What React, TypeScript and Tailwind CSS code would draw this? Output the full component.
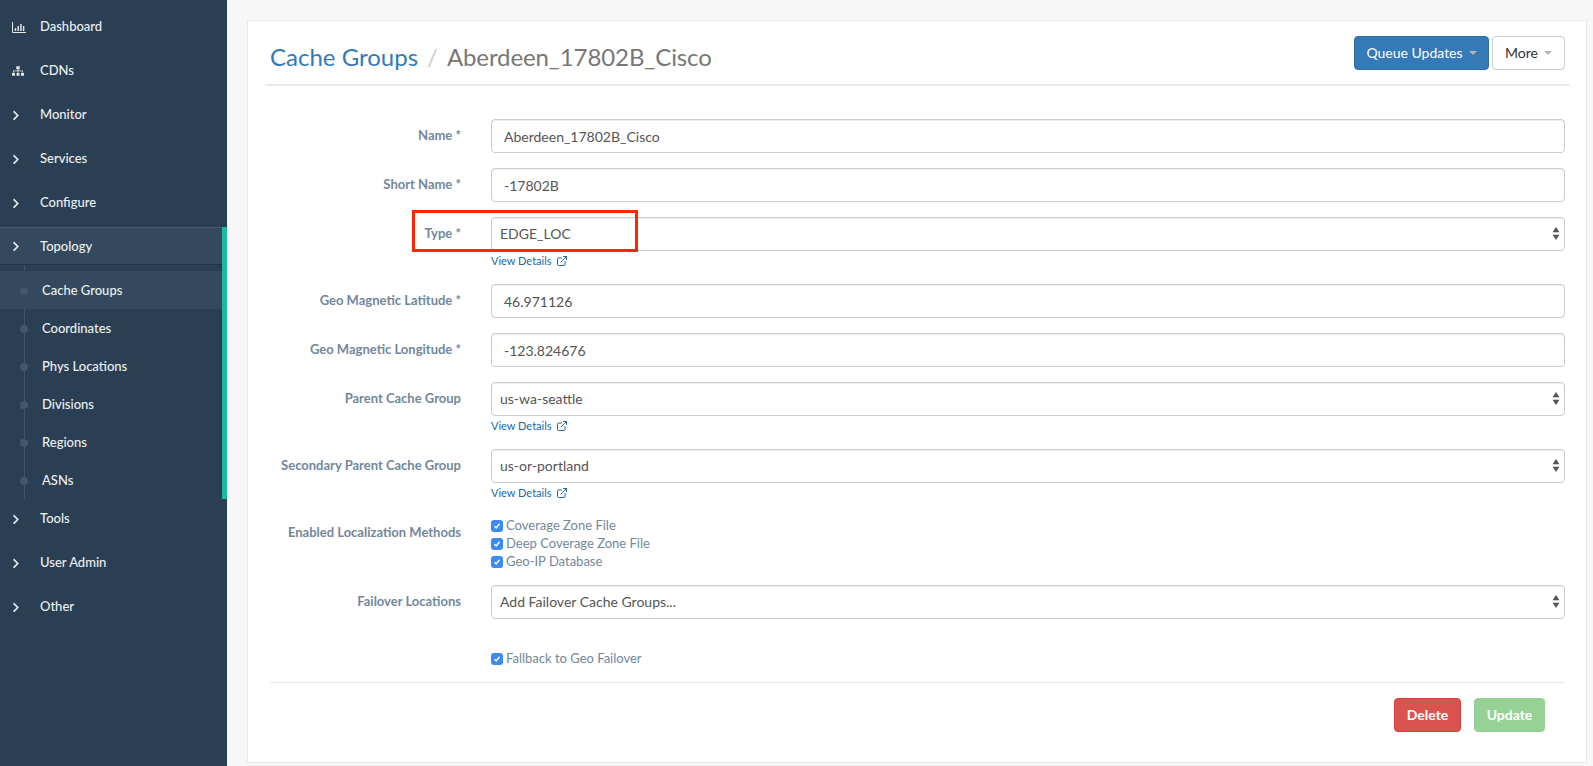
import { ExternalLink } from 'lucide-react';
import { FaChevronRight, FaSitemap } from 'react-icons/fa';

const font = { fontFamily: 'Lato, sans-serif' };

const subItems = ['Cache Groups', 'Coordinates', 'Phys Locations', 'Divisions', 'Regions', 'ASNs'];

function ChartIcon() {
  return (
    <svg width="14" height="11" viewBox="0 0 14 11" fill="none">
      <path d="M0.5 0V10.5H14" stroke="currentColor" strokeWidth="1" />
      <path d="M3.5 6V9M6.2 4V9M8.9 2V9M11.6 4V9" stroke="currentColor" strokeWidth="1.5" />
    </svg>
  );
}

function NavItem({ label, icon, active }: { label: string; icon?: React.ReactNode; active?: boolean }) {
  return (
    <div
      className={
        active
          ? 'flex h-[38px] items-center border-t border-t-[#455666] border-b border-b-[#24354a] bg-[#34495d] pt-[1px]'
          : 'flex h-11 items-center'
      }
    >
      <span className="flex w-[40px] shrink-0 pl-3 text-[#e7e7e7]">
        {icon ?? <FaChevronRight className="h-[11px] w-[8px]" />}
      </span>
      <span className="text-[13px] font-medium text-[#ecf0f1]">{label}</span>
    </div>
  );
}

function Sidebar() {
  return (
    <aside className="flex h-full w-[227px] shrink-0 flex-col bg-[#2a3f54] pt-[5px]">
      <NavItem label="Dashboard" icon={<ChartIcon />} />
      <NavItem label="CDNs" icon={<FaSitemap size={12} />} />
      <NavItem label="Monitor" />
      <NavItem label="Services" />
      <NavItem label="Configure" />
      <div className="mt-[2px] mb-[-2px] border-r-[5px] border-r-[#1abb9c]">
        <NavItem label="Topology" active />
        <div className="relative pt-[6px]">
          <div className="absolute left-[24px] top-0 bottom-0 w-px bg-[#425668]" />
          {subItems.map((item) => (
            <div
              key={item}
              className={`relative flex h-[38px] items-center pl-[42px] pt-[1px] text-[13px] font-medium text-[#ecf0f1] ${
                item === 'Cache Groups' ? 'bg-[#34495d]' : ''
              }`}
            >
              <span className="absolute left-[20px] h-2 w-2 rounded-full bg-[#425668]" />
              {item}
            </div>
          ))}
        </div>
      </div>
      <NavItem label="Tools" />
      <NavItem label="User Admin" />
      <NavItem label="Other" />
    </aside>
  );
}

function Label({ children, required }: { children: string; required?: boolean }) {
  return (
    <label className="w-[196px] shrink-0 pt-[7px] text-right text-[13px] font-bold text-[#73879c]">
      {children}
      {required && <span> *</span>}
    </label>
  );
}

function TextRow({ label, value }: { label: string; value: string }) {
  return (
    <div className="mb-[15px] flex">
      <Label required>{label}</Label>
      <input
        readOnly
        defaultValue={value}
        className="ml-[30px] h-[34px] flex-1 rounded border border-[#ccc] bg-white px-3 text-sm text-[#555] shadow-[inset_0_1px_1px_rgba(0,0,0,0.075)] outline-none"
      />
    </div>
  );
}

function SelectArrows() {
  return (
    <svg width="8" height="13" viewBox="0 0 8 13" className="pointer-events-none absolute right-[5px] top-[10px] text-[#555]">
      <path d="M4 0L7.5 5.2H0.5Z M0.5 7.8H7.5L4 13Z" fill="currentColor" />
    </svg>
  );
}

function SelectRow({
  label,
  value,
  required,
  details,
}: {
  label: string;
  value: string;
  required?: boolean;
  details?: boolean;
}) {
  return (
    <div className="mb-[15px] flex">
      <Label required={required}>{label}</Label>
      <div className="ml-[30px] flex-1">
        <div className="relative">
          <select
            defaultValue={value}
            className="h-[34px] w-full appearance-none rounded border border-[#ccc] bg-white px-2 text-sm text-[#555] shadow-[inset_0_1px_1px_rgba(0,0,0,0.075)] outline-none"
          >
            <option>{value}</option>
          </select>
          <SelectArrows />
        </div>
        {details && (
          <a className="flex h-[18px] items-center gap-[4px] pt-[2px] text-[11px] text-[#23689f]">
            View Details <ExternalLink size={12} />
          </a>
        )}
      </div>
    </div>
  );
}

function Check({ label }: { label: string }) {
  return (
    <div className="flex h-[18px] items-center gap-[3px] pt-[1px] text-[13px] text-[#73879c]">
      <span className="flex h-3 w-3 items-center justify-center rounded-[3px] bg-[#3b8af5]">
        <svg width="8" height="8" viewBox="0 0 8 8" fill="none">
          <path d="M1.5 4.2L3.2 6L6.5 1.8" stroke="white" strokeWidth="1.4" />
        </svg>
      </span>
      {label}
    </div>
  );
}

function Caret() {
  return <span className="ml-[6px] inline-block border-x-4 border-t-4 border-x-transparent border-t-[#b5b5b5]" />;
}

export default function App() {
  return (
    <div className="flex h-screen overflow-hidden bg-[#f7f7f7]" style={font}>
      <Sidebar />
      <main className="flex-1 pl-5 pr-[6px] pt-5">
        <div className="h-[743px] border border-[#e6e9ed] bg-white pl-[17px] pr-[16px]">
          <div className="flex h-[65px] items-start justify-between border-b-2 border-[#e6e9ed] pt-[15px]">
            <h1 className="pl-[5px] pt-[3px] text-2xl font-normal leading-[36px] text-[#777]">
              <a className="text-[#337ab7]">Cache Groups</a>
              <span className="px-[9px] text-[#ccc]">/</span>
              <span className="tracking-[-0.1px]">Aberdeen_17802B_Cisco</span>
            </h1>
            <div className="flex gap-[3px] pr-[5px]">
              <button className="flex h-[34px] w-[135px] items-center justify-center rounded border border-[#2e6da4] bg-[#337ab7] text-sm text-white">
                Queue Updates
                <Caret />
              </button>
              <button className="flex h-[34px] w-[73px] items-center justify-center rounded border border-[#ccc] bg-white text-sm text-[#333]">
                More
                <Caret />
              </button>
            </div>
          </div>
          <form className="pt-[33px] pr-[5px]">
            <TextRow label="Name" value="Aberdeen_17802B_Cisco" />
            <TextRow label="Short Name" value="-17802B" />
            <div className="relative">
              <SelectRow label="Type" value="EDGE_LOC" required details />
              <div className="pointer-events-none absolute left-[147px] top-[-7px] h-[42px] w-[226px] border-[3px] border-[#ff2600]" />
            </div>
            <TextRow label="Geo Magnetic Latitude" value="46.971126" />
            <TextRow label="Geo Magnetic Longitude" value="-123.824676" />
            <SelectRow label="Parent Cache Group" value="us-wa-seattle" details />
            <SelectRow label="Secondary Parent Cache Group" value="us-or-portland" details />
            <div className="mb-[15px] flex">
              <Label>Enabled Localization Methods</Label>
              <div className="ml-[30px]">
                <Check label="Coverage Zone File" />
                <Check label="Deep Coverage Zone File" />
                <Check label="Geo-IP Database" />
              </div>
            </div>
            <SelectRow label="Failover Locations" value="Add Failover Cache Groups..." />
            <div className="mb-[15px] ml-[226px] mt-[30px]">
              <Check label="Fallback to Geo Failover" />
            </div>
            <div className="ml-[5px] flex h-[66px] items-start justify-end gap-[13px] border-t border-[#e5e5e5] pr-5 pt-[15px]">
              <button type="button" className="h-[34px] w-[67px] rounded border border-[#d43f3a] bg-[#d9534f] text-sm font-bold text-white">
                Delete
              </button>
              <button type="button" className="h-[34px] w-[71px] rounded border border-[#93d092] bg-[#96d295] text-sm font-bold text-white">
                Update
              </button>
            </div>
          </form>
        </div>
      </main>
    </div>
  );
}
